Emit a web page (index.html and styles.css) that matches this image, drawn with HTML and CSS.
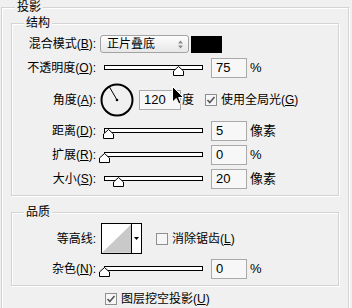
FILE: index.html
```html
<!DOCTYPE html>
<html>
<head lang="zh">
    <meta charset="UTF-8">
    <title>投影</title>
    <link rel="stylesheet" href="styles.css">
</head>
<body>
    <!--投影-->
    <fieldset class="group outer">
        <legend>投影</legend>

        <!--结构-->
        <fieldset class="group">
            <legend>结构</legend>
            <div class="row first">
                <span class="lbl">混合模式(<u>B</u>):</span>
                <div class="select">
                    正片叠底
                    <svg class="spin" width="5" height="9" viewBox="0 0 5 9"><polygon points="0,3.5 2.5,0.5 5,3.5" fill="#8a8a8a"/><polygon points="0,5.5 2.5,8.5 5,5.5" fill="#8a8a8a"/></svg>
                </div>
                <div class="swatch"></div>
            </div>
            <div class="row">
                <span class="lbl">不透明度(<u>O</u>):</span>
                <div class="slider"><svg class="thumb" style="left:68px" width="11" height="10" viewBox="0 0 11 10"><polygon points="0.5,5 5.5,0.5 10.5,5 10.5,9.5 0.5,9.5" fill="#fff" stroke="#000"/></svg></div>
                <div class="num">75</div>
                <span class="unit">%</span>
            </div>
            <div class="row angle">
                <span class="lbl">角度(<u>A</u>):</span>
                <svg class="dial" width="34" height="34" viewBox="0 0 34 34">
                    <circle cx="17" cy="17" r="15.5" fill="none" stroke="#000" stroke-width="2"/>
                    <line x1="17" y1="17" x2="9.5" y2="4" stroke="#000"/>
                    <circle cx="17" cy="17" r="1.3" fill="#000"/>
                </svg>
                <div class="num wide">120</div>
                <span class="deg">度</span>
                <svg class="cb" width="12" height="12" viewBox="0 0 12 12"><rect x="0.5" y="0.5" width="11" height="11" fill="#f6f6f6" stroke="#8e8f8f"/><path d="M2.5 6 L4.8 8.5 L9.5 3" fill="none" stroke="#555" stroke-width="1.6"/></svg>
                <span class="cbtext">使用全局光(<u>G</u>)</span>
                <!--鼠标-->
                <svg class="cursor" width="12" height="19" viewBox="0 0 12 19"><path d="M0.5,0.5 L0.5,16 L4.3,12.4 L6.8,18 L9,17 L6.6,11.5 L11.5,11.5 Z" fill="#000" stroke="#fff"/></svg>
            </div>
            <div class="row">
                <span class="lbl">距离(<u>D</u>):</span>
                <div class="slider"><svg class="thumb" style="left:-2px" width="11" height="10" viewBox="0 0 11 10"><polygon points="0.5,5 5.5,0.5 10.5,5 10.5,9.5 0.5,9.5" fill="#fff" stroke="#000"/></svg></div>
                <div class="num">5</div>
                <span class="unit">像素</span>
            </div>
            <div class="row">
                <span class="lbl">扩展(<u>R</u>):</span>
                <div class="slider"><svg class="thumb" style="left:-6px" width="11" height="10" viewBox="0 0 11 10"><polygon points="0.5,5 5.5,0.5 10.5,5 10.5,9.5 0.5,9.5" fill="#fff" stroke="#000"/></svg></div>
                <div class="num">0</div>
                <span class="unit">%</span>
            </div>
            <div class="row">
                <span class="lbl">大小(<u>S</u>):</span>
                <div class="slider"><svg class="thumb" style="left:8px" width="11" height="10" viewBox="0 0 11 10"><polygon points="0.5,5 5.5,0.5 10.5,5 10.5,9.5 0.5,9.5" fill="#fff" stroke="#000"/></svg></div>
                <div class="num">20</div>
                <span class="unit">像素</span>
            </div>
        </fieldset>

        <!--品质-->
        <fieldset class="group quality">
            <legend>品质</legend>
            <div class="row contour-row">
                <span class="lbl">等高线:</span>
                <div class="contour">
                    <svg width="30" height="29" viewBox="0 0 30 29"><polygon points="0,29 30,0 30,29" fill="#c9c9c9"/></svg>
                    <span class="drop"><svg width="5" height="3" viewBox="0 0 5 3"><polygon points="0,0 5,0 2.5,3" fill="#000"/></svg></span>
                </div>
                <svg class="cb" width="12" height="12" viewBox="0 0 12 12"><rect x="0.5" y="0.5" width="11" height="11" fill="#f6f6f6" stroke="#8e8f8f"/></svg>
                <span class="cbtext">消除锯齿(<u>L</u>)</span>
            </div>
            <div class="row noise">
                <span class="lbl">杂色(<u>N</u>):</span>
                <div class="slider"><svg class="thumb" style="left:-6px" width="11" height="10" viewBox="0 0 11 10"><polygon points="0.5,5 5.5,0.5 10.5,5 10.5,9.5 0.5,9.5" fill="#fff" stroke="#000"/></svg></div>
                <div class="num">0</div>
                <span class="unit">%</span>
            </div>
        </fieldset>

        <div class="knock">
            <svg class="cb" width="12" height="12" viewBox="0 0 12 12"><rect x="0.5" y="0.5" width="11" height="11" fill="#f6f6f6" stroke="#8e8f8f"/><path d="M2.5 6 L4.8 8.5 L9.5 3" fill="none" stroke="#555" stroke-width="1.6"/></svg>
            <span class="cbtext">图层挖空投影(<u>U</u>)</span>
        </div>
    </fieldset>
</body>
</html>
```

FILE: styles.css
```css
* {
    margin: 0;
    padding: 0;
    box-sizing: border-box;
}

body {
    width: 352px;
    height: 308px;
    overflow: hidden;
    background: #f0f0f0;
    color: #000;
    font-size: 12px;
    font-family: "Liberation Sans", "Noto Sans CJK SC", sans-serif;
}

u {
    text-decoration: underline;
}

/* 分组框 */
.group {
    border: 1px solid #d3d3d3;
    box-shadow: inset 1px 1px 0 #fff, 1px 1px 0 #fff;
    padding: 0 0 6px 0;
    margin-top: 1px;
}

.group legend {
    margin-left: 12px;
    padding: 0 2px;
    line-height: 15px;
    background: #f0f0f0;
}

/* 外框往下延伸,底边在窗口外 */
.outer {
    margin: 0 3px 0 1px;
    padding: 0 9px;
    height: 308px;
    border-bottom: 0;
}

.outer > legend {
    margin-left: 4px;
}

.quality {
    margin-top: 9px;
}

/* 每一行 */
.row {
    display: flex;
    align-items: center;
    height: 20px;
    margin-top: 4px;
    line-height: 14px;
}

.row.first {
    margin-top: 3px;
}

.lbl {
    flex: none;
    width: 84px;
    text-align: right;
}

.select {
    display: flex;
    align-items: center;
    justify-content: space-between;
    width: 89px;
    height: 18px;
    margin-left: 4px;
    padding: 0 5px 0 6px;
    border: 1px solid #a3a3a3;
    border-radius: 3px;
    background: linear-gradient(#fdfdfd, #e7e7e7);
}

.swatch {
    width: 31px;
    height: 17px;
    margin-left: 2px;
    background: #000;
}

/* 滑块 */
.slider {
    position: relative;
    width: 99px;
    height: 5px;
    margin: -2px 0 0 8px;
    border: 1px solid #000;
    background: #fff;
}

.thumb {
    position: absolute;
    top: 0;
    display: block;
}

.num {
    width: 36px;
    height: 20px;
    margin-left: 8px;
    padding-left: 4px;
    border: 1px solid #a9a9a9;
    background: #f7f7f7;
    font-size: 13px;
    line-height: 18px;
}

.unit {
    margin-left: 3px;
    font-size: 13px;
}

/* 角度 */
.angle {
    position: relative;
    height: 35px;
}

.dial {
    margin-left: 4px;
}

.angle .num {
    width: 42px;
    margin-left: 5px;
}

.deg {
    margin-left: 1px;
}

.angle .cb {
    margin-left: 11px;
}

.cb {
    flex: none;
}

.cbtext {
    margin-left: 4px;
}

.cursor {
    position: absolute;
    left: 160px;
    top: 4px;
}

/* 品质 */
.contour-row {
    height: 31px;
    margin-top: 3px;
}

.contour {
    display: flex;
    width: 41px;
    height: 31px;
    margin-left: 5px;
    border: 1px solid #000;
    background: #fff;
}

.drop {
    display: flex;
    align-items: center;
    justify-content: center;
    width: 10px;
    border-left: 1px solid #000;
}

.contour-row .cb {
    margin-left: 14px;
}

.noise {
    margin-top: 5px;
}

.knock {
    display: flex;
    align-items: center;
    height: 14px;
    margin-top: 6px;
    padding-left: 94px;
    line-height: 14px;
}
```
